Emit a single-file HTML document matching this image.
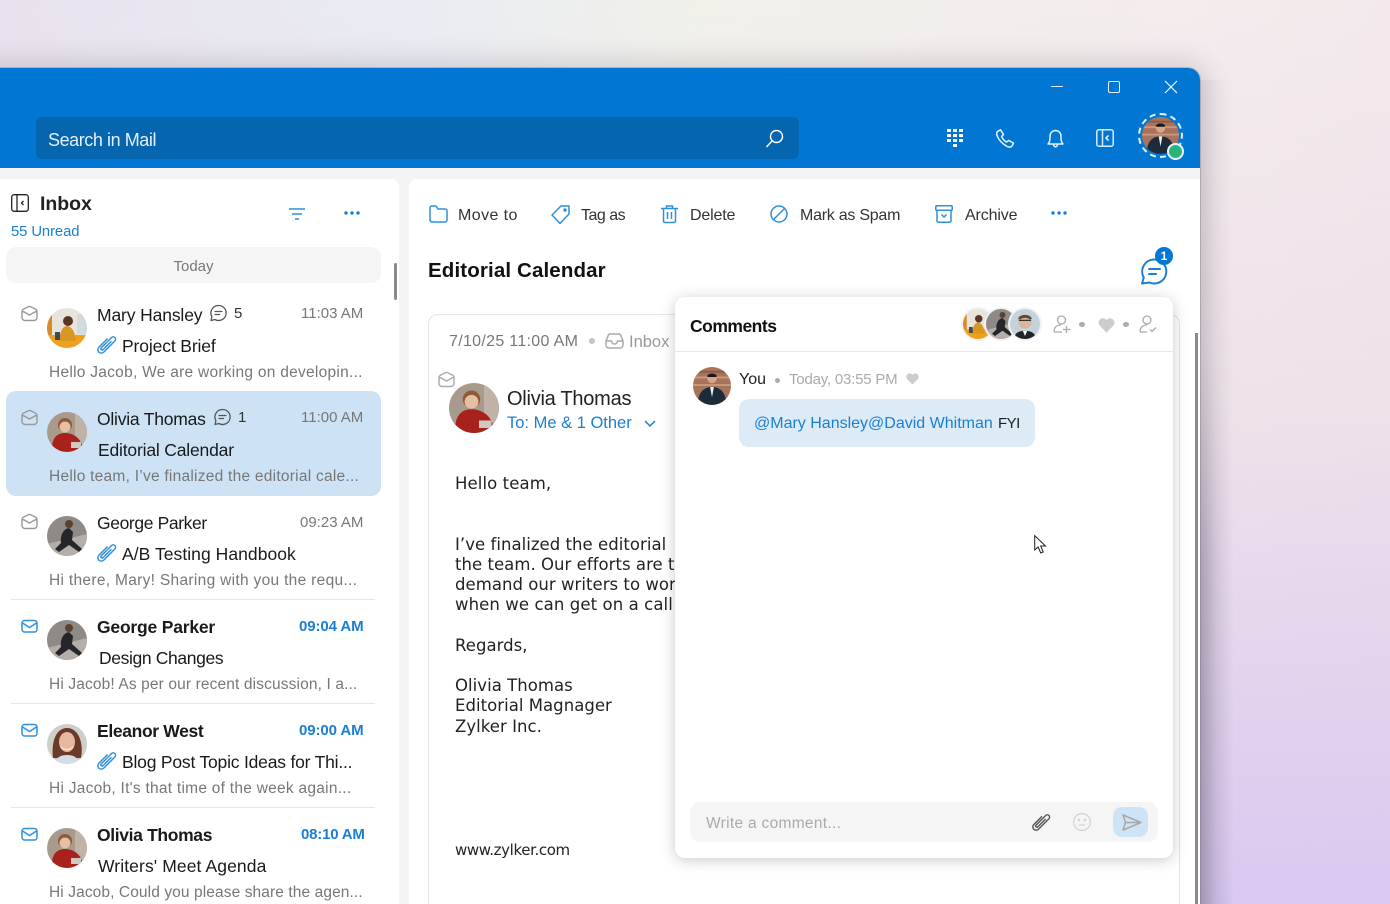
<!DOCTYPE html>
<html><head><meta charset="utf-8"><style>
*{box-sizing:border-box}
html,body{margin:0;padding:0;width:1390px;height:904px;overflow:hidden}
body{position:relative;font-family:"Liberation Sans",sans-serif;background:linear-gradient(180deg,rgba(244,238,238,0) 0%,rgba(234,221,232,.6) 45%,#d9c8f0 100%),linear-gradient(90deg,#e9e2ee 0%,#e9ecf3 30%,#f1f1ea 50%,#f4eced 85%,#f3e9ec 100%)}
.t{position:absolute;white-space:nowrap;line-height:20px;color:#1a1a1a}
.a{position:absolute}
.n{font-size:17.5px;letter-spacing:-.3px}
.b{font-size:17.5px;font-weight:700;letter-spacing:-.35px}
.s{font-size:17.5px;letter-spacing:-.3px}
.p{font-size:15.5px;color:#777;letter-spacing:.1px}
.tm{font-size:15px;color:#777}
.tu{font-size:15px;color:#1a7fd4;font-weight:700;letter-spacing:-.1px}
.tb{font-size:16px;color:#333}
.m{font-family:"DejaVu Sans",sans-serif;font-size:16.5px;color:#222;letter-spacing:.04px}
.hr{position:absolute;left:11px;width:364px;height:1px;background:#e6e6e6}
svg{position:absolute;overflow:visible}
</style></head><body>
<svg width="0" height="0" style="position:absolute">
<defs>
<clipPath id="c"><circle cx="20" cy="20" r="20"/></clipPath>
<g id="mary"><g clip-path="url(#c)"><rect width="40" height="40" fill="#e8e4dc"/><rect x="0" y="0" width="5" height="28" fill="#d98a2a"/><rect x="30" y="6" width="10" height="20" fill="#cfdbe0"/><rect y="27" width="40" height="13" fill="#f0a11c"/><path d="M12 33c1-10 4-15 8-15s8 5 9 15z" fill="#d99622"/><circle cx="21" cy="13" r="5" fill="#5a3520"/><path d="M8 24h5v8H8z" fill="#3d4a52"/></g></g>
<g id="olivia"><g clip-path="url(#c)"><rect width="40" height="40" fill="#a99a8e"/><rect x="28" width="12" height="40" fill="#c0b2a6"/><circle cx="18" cy="13" r="7" fill="#8f5a38"/><circle cx="18" cy="15" r="5.5" fill="#e6c0a4"/><path d="M5 34c1-10 7-13 13-13s14 3 17 12l-3 7H6z" fill="#a8211c"/><rect x="24" y="30" width="10" height="6" fill="#cfc9c2"/></g></g>
<g id="george"><g clip-path="url(#c)"><rect width="40" height="40" fill="#8f8a86"/><path d="M0 28L40 18V40H0z" fill="#b5aea8"/><path d="M22 12c-6 1-9 8-8 15l-6 6 4 3 10-7 10 7 3-3-10-9 1-8z" fill="#26262a"/><circle cx="22" cy="8" r="4" fill="#5c4030"/></g></g>
<g id="eleanor"><g clip-path="url(#c)"><rect width="40" height="40" fill="#cfcfca"/><path d="M6 34c-2-16 3-30 14-30s17 14 14 30z" fill="#6b3a2a"/><ellipse cx="20" cy="18" rx="8" ry="10" fill="#e8b89e"/><path d="M13 22q7 6 14 0-1 3-7 4-6-1-7-4z" fill="#fff"/><path d="M8 40c1-7 6-9 12-9s11 2 12 9z" fill="#d5dde4"/></g></g>
<g id="you"><g clip-path="url(#c)"><rect width="40" height="40" fill="#a8735a"/><rect y="10" width="40" height="2" fill="#c69a82"/><rect y="18" width="40" height="2" fill="#c69a82"/><rect y="4" width="40" height="2" fill="#8d5c48"/><circle cx="20" cy="12" r="5" fill="#d5a88c"/><path d="M15 10c0-4 10-4 10 0l-1 .5H16z" fill="#1d1512"/><path d="M5 40c0-13 6-19 15-19s15 6 15 19z" fill="#1c2a3a"/><path d="M18 21l2 11 2-11z" fill="#eee"/></g></g>
<g id="man2"><g clip-path="url(#c)"><rect width="40" height="40" fill="#c4d2dc"/><circle cx="20" cy="17" r="9" fill="#dcb59a"/><path d="M11 13c1-7 17-7 18 0l-2 1c-4-3-10-3-14 0z" fill="#5c4a3a"/><path d="M12 15h16" stroke="#222" stroke-width="1.5"/><path d="M5 40c1-8 7-11 15-11s14 3 15 11z" fill="#20252c"/><path d="M17 29l3 7 3-7z" fill="#fff"/></g></g>
<g id="open"><path d="M1 5.5a3 3 0 0 1 1.3-2.3L7 .9a3 3 0 0 1 3 0l4.700 2.300A3 3 0 0 1 16 5.500v6a3 3 0 0 1-3 3H4a3 3 0 0 1-3-3z M1.300 5L8.500 9 15.700 5" fill="none" stroke-width="1.400" stroke-linejoin="round"/></g>
<g id="env"><rect x="1" y="1.500" width="15" height="11.500" rx="2.500" fill="none" stroke-width="1.500"/><path d="M1.500 4L8.500 8.500 15.500 4" fill="none" stroke-width="1.500"/></g>
<g id="clip"><path transform="rotate(45 11 11)" d="M7 6V19.500a4 4 0 0 0 8 0V1.300a2.800 2.800 0 0 0-5.600 0V18a1.500 1.500 0 0 0 3 0V5" fill="none" stroke-width="1.700" stroke-linecap="round"/></g>
<g id="bub"><path d="M9.500 1.500a7.500 7.500 0 1 1-3.600 14L2 16.500l.9-3.800A7.500 7.500 0 0 1 9.500 1.500z M6 7.500h7 M6 10.500h4.500" fill="none" stroke="#555" stroke-width="1.300" stroke-linecap="round" stroke-linejoin="round"/></g>
</defs></svg>

<!-- window -->
<div class="a" style="left:1200px;top:80px;width:34px;height:824px;background:linear-gradient(90deg,rgba(80,72,95,.3),rgba(80,72,95,.1) 50%,rgba(80,72,95,0));-webkit-mask-image:linear-gradient(180deg,rgba(0,0,0,.25) 0,rgba(0,0,0,.35) 260px,#000 480px);mask-image:linear-gradient(180deg,rgba(0,0,0,.25) 0,rgba(0,0,0,.35) 260px,#000 480px)"></div>
<div class="a" style="left:-20px;top:68px;width:1220px;height:860px;background:#f4f4f5;border-radius:12px;box-shadow:0 0 0 1px rgba(120,115,120,.35),0 0 26px 5px rgba(70,65,80,.2);overflow:hidden">
 <div class="a" style="left:0;top:0;right:0;height:100px;background:#0177d3"></div>
</div>
<!-- search -->
<div class="a" style="left:36px;top:117px;width:763px;height:42px;background:#0565ae;border-radius:6px"></div>
<div class="t" style="left:48px;top:130px;font-size:18px;color:#e4f0fa;letter-spacing:-.43px">Search in Mail</div>
<svg style="left:765px;top:129px" width="20" height="20" fill="none" stroke="#fff" stroke-width="1.400"><circle cx="11.500" cy="7.500" r="6"/><path d="M7 12l-5.500 6"/></svg>
<!-- window controls -->
<div class="a" style="left:1051px;top:86px;width:12px;height:1px;background:#dfeefa"></div>
<div class="a" style="left:1108px;top:81px;width:12px;height:12px;border:1.500px solid #e8f3fb;border-radius:2px"></div>
<svg style="left:1165px;top:81px" width="12" height="12" stroke="#fff" stroke-width="1.100"><path d="M0 0L12 12M12 0L0 12"/></svg>
<!-- toolbar icons -->
<svg style="left:947px;top:129px" width="17" height="18" fill="#fff"><rect x="0" y="0" width="4" height="3"/><rect x="6" y="0" width="4" height="3"/><rect x="12" y="0" width="4" height="3"/><rect x="0" y="5" width="4" height="3"/><rect x="6" y="5" width="4" height="3"/><rect x="12" y="5" width="4" height="3"/><rect x="0" y="10" width="4" height="3"/><rect x="6" y="10" width="4" height="3"/><rect x="12" y="10" width="4" height="3"/><rect x="6" y="15" width="4" height="3"/></svg>
<svg style="left:996px;top:129px" width="19" height="19" fill="none" stroke="#e8f4fc" stroke-width="1.500" stroke-linejoin="round"><path d="M1.500 2.500L4.500.8l3 4.700-1.800 2c.5 2 3 4.800 5 5.600l2-1.700 4.800 2.800-1.500 2.800c-1 1.500-3 1.200-5 .4C6 14.500 2.500 10.500 1 6.500.5 5 .6 3.500 1.500 2.500z"/></svg>
<svg style="left:1047px;top:129px" width="17" height="19" fill="none" stroke="#e8f4fc" stroke-width="1.500" stroke-linejoin="round"><path d="M1 15c1.500-1.500 2-3 2-6V7a5.500 5.500 0 0 1 11 0v2c0 3 .5 4.500 2 6z M6.500 15.500c0 3 4 3 4 0"/></svg>
<svg style="left:1096px;top:129px" width="18" height="18" fill="none" stroke="#d5ecfb" stroke-width="1.500"><rect x=".8" y=".8" width="16.400" height="16.400" rx="2"/><path d="M6.500 1v16"/><path d="M12.500 6.500L10 9l2.500 2.500" stroke="#fff"/></svg>
<div class="a" style="left:1138px;top:113px;width:45px;height:45px;border-radius:50%;border:2px dashed #e2f1fb"></div>
<svg style="left:1142px;top:117px" width="37" height="37" viewBox="0 0 40 40"><use href="#you"/></svg>
<div class="a" style="left:1167px;top:143px;width:17px;height:17px;border-radius:50%;background:#2ab37c;border:2px solid #e6f3fb"></div>

<!-- left panel -->
<div class="a" style="left:0;top:179px;width:399px;height:725px;background:#fff;border-radius:0 8px 0 0"></div>
<svg style="left:11px;top:194px" width="18" height="18" fill="none" stroke="#222" stroke-width="1.300"><rect x=".7" y=".7" width="16.600" height="16.600" rx="2.500"/><path d="M6 1v16"/><path d="M12.500 7L10.500 9l2 2"/></svg>
<div class="t" style="left:40px;top:194px;font-size:19.5px;font-weight:700;color:#222;letter-spacing:-.03px">Inbox</div>
<div class="t" style="left:11px;top:222px;font-size:14.8px;color:#1a7fd4;letter-spacing:-.08px">55 Unread</div>
<svg style="left:289px;top:208px" width="16" height="13" stroke="#2f8fdc" stroke-width="1.600"><path d="M0 1h16M3 6h10M6 11h4"/></svg>
<svg style="left:344px;top:211px" width="17" height="4" fill="#1a7fd4"><circle cx="2" cy="2" r="1.700"/><circle cx="8" cy="2" r="1.700"/><circle cx="14" cy="2" r="1.700"/></svg>
<div class="a" style="left:6px;top:247px;width:375px;height:36px;background:#f5f5f5;border-radius:10px"></div>
<div class="t" style="left:0;top:257px;width:387px;text-align:center;font-size:15px;color:#777">Today</div>
<div class="a" style="left:394px;top:263px;width:3px;height:37px;background:#8a8a8a;border-radius:2px"></div>
<div class="a" style="left:6px;top:391px;width:375px;height:105px;background:#cde2f5;border-radius:10px"></div>

<!-- row 1 -->
<svg style="left:21px;top:306px" width="17" height="16" stroke="#999"><use href="#open"/></svg>
<svg style="left:47px;top:308px" width="40" height="40"><use href="#mary"/></svg>
<div class="t n" style="left:97px;top:305px;letter-spacing:-.13px">Mary Hansley</div>
<svg style="left:209px;top:304px" width="20" height="20"><use href="#bub"/></svg>
<div class="t" style="left:234px;top:304px;font-size:15px;color:#333">5</div>
<div class="t tm" style="left:301px;top:304px">11:03 AM</div>
<svg style="left:97px;top:335px" width="19" height="19" viewBox="0 0 22 22" stroke="#2f8fdc"><use href="#clip"/></svg>
<div class="t s" style="left:122px;top:336px;letter-spacing:-.13px">Project Brief</div>
<div class="t p" style="left:49px;top:363px;letter-spacing:.27px">Hello Jacob, We are working on developin...</div>
<!-- row 2 -->
<svg style="left:21px;top:410px" width="17" height="16" stroke="#999"><use href="#open"/></svg>
<svg style="left:47px;top:412px" width="40" height="40"><use href="#olivia"/></svg>
<div class="t n" style="left:97px;top:409px;letter-spacing:-.22px">Olivia Thomas</div>
<svg style="left:213px;top:408px" width="20" height="20"><use href="#bub"/></svg>
<div class="t" style="left:238px;top:408px;font-size:15px;color:#333">1</div>
<div class="t tm" style="left:301px;top:408px">11:00 AM</div>
<div class="t s" style="left:98px;top:440px;letter-spacing:-.18px">Editorial Calendar</div>
<div class="t p" style="left:49px;top:467px;letter-spacing:.25px">Hello team, I’ve finalized the editorial cale...</div>
<!-- row 3 -->
<svg style="left:21px;top:514px" width="17" height="16" stroke="#999"><use href="#open"/></svg>
<svg style="left:47px;top:516px" width="40" height="40"><use href="#george"/></svg>
<div class="t n" style="left:97px;top:513px;letter-spacing:-.38px">George Parker</div>
<div class="t tm" style="left:300px;top:513px">09:23 AM</div>
<svg style="left:97px;top:543px" width="19" height="19" viewBox="0 0 22 22" stroke="#2f8fdc"><use href="#clip"/></svg>
<div class="t s" style="left:122px;top:544px;letter-spacing:.05px">A/B Testing Handbook</div>
<div class="t p" style="left:49px;top:571px;letter-spacing:.31px">Hi there, Mary! Sharing with you the requ...</div>
<div class="hr" style="top:599px"></div>
<!-- row 4 -->
<svg style="left:21px;top:619px" width="17" height="14" stroke="#2f8fdc"><use href="#env"/></svg>
<svg style="left:47px;top:620px" width="40" height="40"><use href="#george"/></svg>
<div class="t b" style="left:97px;top:617px;letter-spacing:-.2px">George Parker</div>
<div class="t tu" style="left:299px;top:617px">09:04 AM</div>
<div class="t s" style="left:99px;top:648px;letter-spacing:-.37px">Design Changes</div>
<div class="t p" style="left:49px;top:675px;letter-spacing:.13px">Hi Jacob! As per our recent discussion, I a...</div>
<div class="hr" style="top:703px"></div>
<!-- row 5 -->
<svg style="left:21px;top:723px" width="17" height="14" stroke="#2f8fdc"><use href="#env"/></svg>
<svg style="left:47px;top:724px" width="40" height="40"><use href="#eleanor"/></svg>
<div class="t b" style="left:97px;top:721px">Eleanor West</div>
<div class="t tu" style="left:299px;top:721px">09:00 AM</div>
<svg style="left:97px;top:751px" width="19" height="19" viewBox="0 0 22 22" stroke="#2f8fdc"><use href="#clip"/></svg>
<div class="t s" style="left:122px;top:752px;letter-spacing:-.2px">Blog Post Topic Ideas for Thi...</div>
<div class="t p" style="left:49px;top:779px;letter-spacing:.26px">Hi Jacob, It's that time of the week again...</div>
<div class="hr" style="top:807px"></div>
<!-- row 6 -->
<svg style="left:21px;top:827px" width="17" height="14" stroke="#2f8fdc"><use href="#env"/></svg>
<svg style="left:47px;top:828px" width="40" height="40"><use href="#olivia"/></svg>
<div class="t b" style="left:97px;top:825px">Olivia Thomas</div>
<div class="t tu" style="left:301px;top:825px;letter-spacing:-.2px">08:10 AM</div>
<div class="t s" style="left:98px;top:856px;letter-spacing:.1px">Writers' Meet Agenda</div>
<div class="t p" style="left:49px;top:883px">Hi Jacob, Could you please share the agen...</div>

<!-- right panel -->
<div class="a" style="left:409px;top:179px;width:791px;height:725px;background:#fff;border-radius:8px 0 0 0"></div>
<svg style="left:429px;top:205px" width="19" height="18" fill="none" stroke="#2f8fdc" stroke-width="1.500" stroke-linejoin="round"><path d="M1 3a2 2 0 0 1 2-2h4l2 3h7a2 2 0 0 1 2 2v9a2 2 0 0 1-2 2H3a2 2 0 0 1-2-2z"/></svg>
<div class="t tb" style="left:458px;top:206px;letter-spacing:.42px">Move to</div>
<svg style="left:551px;top:205px" width="20" height="19" fill="none" stroke="#2f8fdc" stroke-width="1.500" stroke-linejoin="round"><path d="M1 10l9-9h8v8l-9 9.500z"/><circle cx="14" cy="5" r="1" fill="#2f8fdc"/></svg>
<div class="t tb" style="left:581px;top:206px;letter-spacing:-.5px">Tag as</div>
<svg style="left:661px;top:205px" width="17" height="18" fill="none" stroke="#2f8fdc" stroke-width="1.500"><path d="M0 3.500h17M5.500 3V1h6v2M2.500 4v12a1.500 1.500 0 0 0 1.500 1.500h9a1.500 1.500 0 0 0 1.500-1.500V4M6.500 7v7M10.500 7v7"/></svg>
<div class="t tb" style="left:690px;top:206px;letter-spacing:-.17px">Delete</div>
<svg style="left:770px;top:205px" width="18" height="18" fill="none" stroke="#2f8fdc" stroke-width="1.500"><circle cx="9" cy="9" r="8"/><path d="M3.500 14.500L14.500 3.500"/></svg>
<div class="t tb" style="left:800px;top:206px;letter-spacing:-.25px">Mark as Spam</div>
<svg style="left:935px;top:205px" width="18" height="18" fill="none" stroke="#2f8fdc" stroke-width="1.500" stroke-linejoin="round"><rect x=".8" y=".8" width="16.400" height="4.500" rx="1"/><path d="M2 5.500v10.500a1.200 1.200 0 0 0 1.200 1.200h11.600a1.200 1.200 0 0 0 1.200-1.200V5.500M6.500 9.500L9 12l2.500-2.500"/></svg>
<div class="t tb" style="left:965px;top:206px;letter-spacing:-.14px">Archive</div>
<svg style="left:1051px;top:211px" width="17" height="4" fill="#1a7fd4"><circle cx="2" cy="2" r="1.700"/><circle cx="8" cy="2" r="1.700"/><circle cx="14" cy="2" r="1.700"/></svg>
<div class="t" style="left:428px;top:261px;font-size:20.5px;font-weight:700;color:#111;letter-spacing:.13px">Editorial Calendar</div>
<svg style="left:1141px;top:258px" width="27" height="27" fill="none" stroke="#1a7fd4" stroke-width="2" stroke-linecap="round" stroke-linejoin="round"><path d="M13.500 1.500a12 12 0 1 1-5 23L1 25.500l1.800-6A12 12 0 0 1 13.500 1.500z M8 11h11M8 16h7"/></svg>
<div class="a" style="left:1155px;top:247px;width:18px;height:18px;border-radius:50%;background:#0177d3;color:#fff;font-size:12px;font-weight:700;text-align:center;line-height:18px">1</div>

<!-- mail card -->
<div class="a" style="left:428px;top:314px;width:752px;height:620px;border:1px solid #e4e4e4;border-radius:10px;background:#fff"></div>
<div class="t" style="left:449px;top:332px;font-size:16px;color:#777;letter-spacing:.31px">7/10/25 11:00 AM</div>
<div class="a" style="left:589px;top:338px;width:6px;height:6px;border-radius:50%;background:#c4c4c4"></div>
<svg style="left:605px;top:333px" width="19" height="16" fill="none" stroke="#aaa" stroke-width="1.500"><path d="M1 8l2-5a2.500 2.500 0 0 1 2-2h9a2.500 2.500 0 0 1 2 2l2 5v4a3 3 0 0 1-3 3H4a3 3 0 0 1-3-3z M1 8h5.500a3 3 0 0 0 6 0H18"/></svg>
<div class="t" style="left:629px;top:332px;font-size:16.5px;color:#999">Inbox</div>
<svg style="left:438px;top:372px" width="17" height="16" stroke="#aaa"><use href="#open"/></svg>
<svg style="left:449px;top:383px" width="50" height="50" viewBox="0 0 40 40"><use href="#olivia"/></svg>
<div class="t" style="left:507px;top:389px;font-size:20px;color:#222;letter-spacing:-.25px">Olivia Thomas</div>
<div class="t" style="left:507px;top:413px;font-size:16.5px;color:#1a7fd4">To: Me &amp; 1 Other</div>
<svg style="left:644px;top:420px" width="12" height="8" fill="none" stroke="#1a7fd4" stroke-width="1.500"><path d="M1 1l5 5 5-5"/></svg>
<div class="t m" style="left:455px;top:474px;letter-spacing:.1px">Hello team,</div>
<div class="t m" style="left:455px;top:535px;letter-spacing:.04px">I’ve finalized the editorial</div>
<div class="t m" style="left:455px;top:555px">the team. Our efforts are to meet</div>
<div class="t m" style="left:455px;top:575px">demand our writers to work on</div>
<div class="t m" style="left:455px;top:595px;letter-spacing:.1px">when we can get on a call to</div>
<div class="t m" style="left:455px;top:636px">Regards,</div>
<div class="t m" style="left:455px;top:676px">Olivia Thomas</div>
<div class="t m" style="left:455px;top:696px">Editorial Magnager</div>
<div class="t m" style="left:455px;top:717px">Zylker Inc.</div>
<div class="t" style="left:455px;top:840px;font-family:'DejaVu Sans',sans-serif;font-size:15px;color:#222;letter-spacing:-.38px">www.zylker.com</div>
<div class="a" style="left:1195px;top:333px;width:3px;height:571px;background:#8a8a8a"></div>

<!-- comments popover -->
<div class="a" style="left:675px;top:297px;width:498px;height:561px;background:#fff;border-radius:10px;box-shadow:0 2px 14px rgba(60,60,70,.28)"></div>
<div class="t" style="left:690px;top:316px;font-size:17.5px;font-weight:700;color:#111;letter-spacing:-.5px">Comments</div>
<div class="a" style="left:675px;top:351px;width:498px;height:1px;background:#e8e8e8"></div>
<div class="a" style="left:961px;top:307px;width:34px;height:34px;border-radius:50%;background:#f2f2f4"></div>
<svg style="left:963px;top:309px" width="30" height="30" viewBox="0 0 40 40"><use href="#mary"/></svg>
<div class="a" style="left:984px;top:307px;width:34px;height:34px;border-radius:50%;background:#f2f2f4"></div>
<svg style="left:986px;top:309px" width="30" height="30" viewBox="0 0 40 40"><use href="#george"/></svg>
<div class="a" style="left:1008px;top:307px;width:34px;height:34px;border-radius:50%;background:#f2f2f4"></div>
<svg style="left:1010px;top:309px" width="30" height="30" viewBox="0 0 40 40"><use href="#man2"/></svg>
<svg style="left:1053px;top:315px" width="19" height="19" fill="none" stroke="#aaa" stroke-width="1.300"><circle cx="8.500" cy="5" r="4"/><path d="M1 17c0-5 3-7 7-7M13.500 11v7M10 14.500h7.500M1 17h8"/></svg>
<div class="a" style="left:1079px;top:322px;width:6px;height:5px;border-radius:50%;background:#aaa"></div>
<svg style="left:1098px;top:318px" width="17" height="15" fill="#ccc"><path d="M8.500 14.500L1.500 7.500A4.300 4.300 0 0 1 8.500 2a4.300 4.300 0 0 1 7 5.500z"/></svg>
<div class="a" style="left:1123px;top:322px;width:6px;height:5px;border-radius:50%;background:#aaa"></div>
<svg style="left:1139px;top:315px" width="18" height="19" fill="none" stroke="#aaa" stroke-width="1.300"><circle cx="8" cy="5" r="4"/><path d="M1 17c0-5 3-7 7-7M1 17h7M11 14.500l2 2 4-4"/></svg>

<svg style="left:693px;top:367px" width="38" height="38" viewBox="0 0 40 40"><use href="#you"/></svg>
<div class="t" style="left:739px;top:370px;font-size:16px;color:#222">You</div>
<div class="a" style="left:775px;top:378px;width:5px;height:5px;border-radius:50%;background:#aaa"></div>
<div class="t" style="left:789px;top:370px;font-size:15px;color:#aaa;letter-spacing:-.2px">Today, 03:55 PM</div>
<svg style="left:906px;top:373px" width="13" height="12" fill="#ccc"><path d="M6.500 11.500L1 6A3.300 3.300 0 0 1 6.500 1.800 3.300 3.300 0 0 1 12 6z"/></svg>
<div class="a" style="left:739px;top:399px;width:296px;height:48px;background:#ddebf7;border-radius:10px"></div>
<div class="t" style="left:754px;top:414px;font-size:16px;color:#1a7fd4">@Mary Hansley@David Whitman</div>
<div class="t" style="left:998px;top:414px;font-size:15px;color:#222;letter-spacing:-.5px">FYI</div>

<!-- composer -->
<div class="a" style="left:690px;top:802px;width:468px;height:40px;background:#f5f5f6;border-radius:10px"></div>
<div class="t" style="left:706px;top:814px;font-size:15.5px;color:#aaa;letter-spacing:.3px">Write a comment...</div>
<svg style="left:1032px;top:813px" width="18" height="18" viewBox="0 0 22 22" stroke="#555"><use href="#clip"/></svg>
<svg style="left:1073px;top:813px" width="18" height="18" fill="none" stroke="#d2d2d2" stroke-width="1.200"><circle cx="9" cy="9" r="8.400"/><circle cx="6" cy="7" r=".7" fill="#c8c8c8"/><circle cx="12" cy="7" r=".7" fill="#c8c8c8"/><path d="M6 12h6"/></svg>
<div class="a" style="left:1113px;top:807px;width:35px;height:30px;background:#cde4f6;border-radius:9px"></div>
<svg style="left:1122px;top:814px" width="19" height="17" fill="none" stroke="#a8a8a8" stroke-width="1.500" stroke-linejoin="round"><path d="M1 1l18 7.500L1 16l2.500-7.500zM3.500 8.500H19"/></svg>
<!-- cursor -->
<svg style="left:1034px;top:535px" width="13" height="20" fill="#fff" stroke="#222" stroke-width="1"><path d="M.7.700V15l3.500-3 2.500 6 2.500-1-2.500-6H11.500z"/></svg>
</body></html>
